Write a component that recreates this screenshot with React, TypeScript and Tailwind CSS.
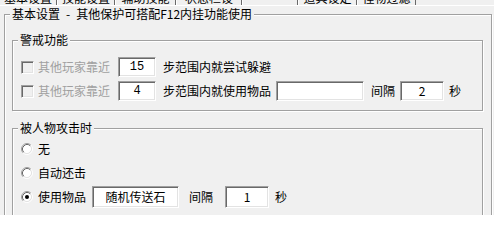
import React from 'react';

const font = { fontFamily: '"Noto Sans CJK SC", "Liberation Sans", sans-serif' };

const tabs: { label: string; w: string }[] = [
    { label: '基本设置', w: 'w-[57px]' },
    { label: '技能设置', w: 'w-[58px]' },
    { label: '辅助技能', w: 'w-[61px]' },
    { label: '状态栏设', w: 'w-[66px]' },
    { label: '', w: 'w-[56px]' },
    { label: '道具设定', w: 'w-[59px]' },
    { label: '怪物过滤', w: 'w-[59px]' },
];

const Box: React.FC<{ className: string; children?: React.ReactNode }> = ({ className, children }) => (
    <div
        className={`flex items-center justify-center bg-white border border-t-[#a0a0a0] border-l-[#a0a0a0] border-b-white border-r-white shadow-[inset_1px_1px_0_#696969,inset_-1px_-1px_0_#e3e3e3] text-[12px] text-black ${className}`}
    >
        {children}
    </div>
);

const Check = () => (
    <div className="w-[13px] h-[13px] shrink-0 bg-[#f0f0f0] border border-t-[#a0a0a0] border-l-[#a0a0a0] border-b-white border-r-white shadow-[inset_1px_1px_0_#696969,inset_-1px_-1px_0_#e3e3e3]" />
);

const Radio: React.FC<{ checked?: boolean }> = ({ checked }) => (
    <svg width="12" height="12" viewBox="0 0 12 12" className="shrink-0">
        <circle cx="6" cy="6" r="4.2" fill="#fff" />
        <path d="M2.11 9.89 A5.5 5.5 0 0 1 9.89 2.11" fill="none" stroke="#a0a0a0" strokeWidth="1" />
        <path d="M9.89 2.11 A5.5 5.5 0 0 1 2.11 9.89" fill="none" stroke="#ffffff" strokeWidth="1" />
        <path d="M2.82 9.18 A4.5 4.5 0 0 1 9.18 2.82" fill="none" stroke="#696969" strokeWidth="1" />
        <path d="M9.18 2.82 A4.5 4.5 0 0 1 2.82 9.18" fill="none" stroke="#e3e3e3" strokeWidth="1" />
        {checked && <circle cx="6" cy="6" r="2" fill="#000" />}
    </svg>
);

export default function App() {
    return (
        <div className="w-[494px] h-[215px] overflow-hidden bg-[#f0f0f0] text-[12px] text-black" style={font}>
            {/* cut-off tab strip */}
            <div className="flex h-[6px] overflow-hidden border-b border-white">
                {tabs.map((t, i) => (
                    <div
                        key={i}
                        className={`${t.w} h-[5px] overflow-hidden flex justify-center border-l border-l-white border-r border-r-[#696969] first:border-l-0`}
                    >
                        <span className="leading-[12px] -mt-[8px] whitespace-nowrap">{t.label}</span>
                    </div>
                ))}
            </div>

            <fieldset className="ml-[4px] mt-[1px] w-[488px] border border-[#a0a0a0] shadow-[inset_1px_1px_0_#fff,1px_1px_0_#fff] pl-[7px] pt-[12px] pb-[40px]">
                <legend className="-ml-[2px] px-[2px] leading-[14px] bg-[#f0f0f0] whitespace-pre">
                    {'基本设置\u2002-\u2002其他保护可搭配F12内挂功能使用'}
                </legend>

                {/* 警戒功能 */}
                <fieldset className="w-[471px] border border-[#a0a0a0] shadow-[inset_1px_1px_0_#fff,1px_1px_0_#fff] pl-[8px] pt-[10px] pb-[9px]">
                    <legend className="-ml-[3px] px-[2px] leading-[14px] bg-[#f0f0f0]">警戒功能</legend>
                    <div className="flex flex-col gap-[4px]">
                        <div className="flex items-center h-[20px]">
                            <Check />
                            <span className="ml-[4px] text-[#a0a0a0] w-[72px]">其他玩家靠近</span>
                            <Box className="ml-[8px] w-[38px] h-[20px] font-['Liberation_Mono']">15</Box>
                            <span className="ml-[7px]">步范围内就尝试躲避</span>
                        </div>
                        <div className="flex items-center h-[20px]">
                            <Check />
                            <span className="ml-[4px] text-[#a0a0a0] w-[72px]">其他玩家靠近</span>
                            <Box className="ml-[8px] w-[38px] h-[20px] font-['Liberation_Mono']">4</Box>
                            <span className="ml-[7px] w-[108px]">步范围内就使用物品</span>
                            <Box className="ml-[5px] w-[88px] h-[20px]" />
                            <span className="ml-[7px] w-[24px]">间隔</span>
                            <Box className="ml-[5px] w-[44px] h-[20px]">2</Box>
                            <span className="ml-[5px]">秒</span>
                        </div>
                    </div>
                </fieldset>

                {/* 被人物攻击时 */}
                <fieldset className="mt-[10px] w-[471px] border border-[#a0a0a0] shadow-[inset_1px_1px_0_#fff,1px_1px_0_#fff] pl-[8px] pt-[3px] pb-[40px]">
                    <legend className="-ml-[3px] px-[2px] leading-[14px] bg-[#f0f0f0]">被人物攻击时</legend>
                    <div className="flex flex-col gap-[2px]">
                        <div className="flex items-center h-[22px]">
                            <Radio />
                            <span className="ml-[5px]">无</span>
                        </div>
                        <div className="flex items-center h-[22px]">
                            <Radio />
                            <span className="ml-[5px]">自动还击</span>
                        </div>
                        <div className="flex items-center h-[22px]">
                            <Radio checked />
                            <span className="ml-[5px] w-[48px]">使用物品</span>
                            <Box className="ml-[6px] w-[87px] h-[22px]">随机传送石</Box>
                            <span className="ml-[10px] w-[24px]">间隔</span>
                            <Box className="ml-[12px] w-[44px] h-[22px]">1</Box>
                            <span className="ml-[6px]">秒</span>
                        </div>
                    </div>
                </fieldset>
            </fieldset>
        </div>
    );
}
